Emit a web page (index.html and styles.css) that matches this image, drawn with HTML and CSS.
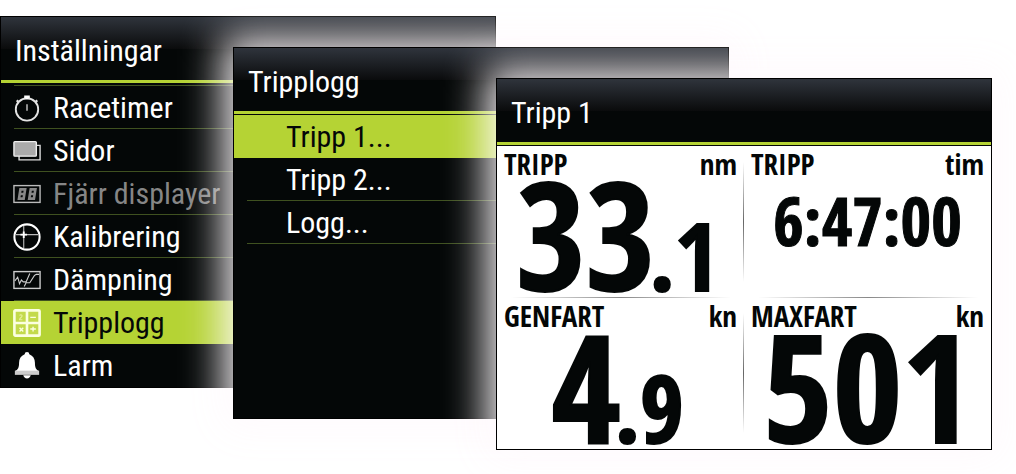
FILE: index.html
```html
<!DOCTYPE html>
<html lang="sv">

<head>
    <meta charset="UTF-8">
    <meta name="viewport" content="width=device-width, initial-scale=1.0">
    <title>Tripplogg</title>
    <link rel="stylesheet" href="styles.css">
</head>

<body>
    <main class="screens">
        <section class="panel settings">
            <h2 class="title">Inställningar</h2>
            <ul class="menu">
                <li>
                    <button type="button">
                        <svg class="icon" viewBox="0 0 30 30" fill="none" stroke="#e4e4e4">
                            <circle cx="15" cy="16.500" r="12" stroke-width="2" />
                            <path d="M15 11v7" stroke="#999" stroke-width="2" />
                            <path d="M12 3h6M15 2.500v3" stroke="#fff" stroke-width="3" />
                            <path d="M5.500 6.500l-1.500 2M24.500 6.500l1.500 2" stroke-width="2" />
                        </svg>
                        Racetimer
                    </button>
                </li>
                <li>
                    <button type="button">
                        <svg class="icon" viewBox="0 0 30 30" fill="none" stroke="#ddd">
                            <path d="M6.500 20v4.500h22.500V9H25" stroke-width="1.500" />
                            <rect x="1" y="5" width="24" height="15.500" rx="1" fill="#aaa" stroke="#eee" stroke-width="1.500" />
                        </svg>
                        Sidor
                    </button>
                </li>
                <li>
                    <button type="button" disabled>
                        <svg class="icon" viewBox="0 0 30 30" fill="none" stroke="#bbb">
                            <rect x="1" y="6" width="28" height="18" stroke-width="1.500" />
                            <path d="M8 10h5l-.8 5H7.200zM7.200 15h5l-.8 5h-5zM19 10h5l-.8 5h-5zM18.200 15h5l-.8 5h-5z" stroke="#888" stroke-width="2.800" />
                        </svg>
                        Fjärr displayer
                    </button>
                </li>
                <li>
                    <button type="button">
                        <svg class="icon" viewBox="0 0 30 30" fill="none" stroke="#fff">
                            <circle cx="15" cy="15" r="13.500" stroke-width="2.200" />
                            <path d="M3 12.500h24M11.500 3v24" stroke="#bbb" stroke-width="1.200" />
                            <path d="M8 12.500h7M11.500 9v7" stroke-width="2" />
                        </svg>
                        Kalibrering
                    </button>
                </li>
                <li>
                    <button type="button">
                        <svg class="icon" viewBox="0 0 30 30" fill="none" stroke="#ccc">
                            <rect x="1" y="6" width="28" height="18" stroke-width="1.500" />
                            <path d="M2 16l3-4 2 7 2-4 2 2h3l4-9M12 22l2-4h4l5-8 2-1h3" stroke-width="1.200" />
                        </svg>
                        Dämpning
                    </button>
                </li>
                <li>
                    <button type="button" class="selected">
                        <svg class="icon" viewBox="0 0 30 30" fill="none" stroke="#fbffe0">
                            <rect x="1.500" y="1.500" width="27" height="27" rx="1" fill="#c3da4c" stroke-width="2.800" />
                            <path d="M15 2v26M2 15h26" stroke-width="2.800" />
                            <path d="M18.500 9h6M7 20l4 4M11 20l-4 4M18.500 21.500h6M21.500 19v5" stroke-width="1.500" />
                            <path d="M7 7c1-1.500 3.500-.5 2.500 1s-2.500 2-2.500 3.500h3" stroke="#e4f09a" stroke-width="1.200" />
                        </svg>
                        Tripplogg
                    </button>
                </li>
                <li>
                    <button type="button">
                        <svg class="icon" viewBox="0 0 30 30">
                            <path d="M12.500 2.500a2.500 2.500 0 0 1 5 0c4 1.500 6 5 6 9 0 5 1 7.500 4.500 9H2c3.500-1.500 4.500-4 4.500-9 0-4 2-7.500 6-9z" fill="#fff" />
                            <path d="M2 20h26v4.500H2z" fill="#ccc" />
                            <path d="M11 25h8c-.5 2-2 3.500-4 3.500s-3.500-1.500-4-3.500z" fill="#fff" />
                        </svg>
                        Larm
                    </button>
                </li>
            </ul>
        </section>

        <section class="panel triplog">
            <h2 class="title">Tripplogg</h2>
            <ul class="menu indented">
                <li><button type="button" class="selected">Tripp 1...</button></li>
                <li><button type="button">Tripp 2...</button></li>
                <li><button type="button">Logg...</button></li>
            </ul>
        </section>

        <section class="panel trip">
            <h2 class="title">Tripp 1</h2>
            <div class="gauges">
                <div class="gauge">
                    <div class="caption"><span>TRIPP</span><span>nm</span></div>
                    <div class="value">33<small>.1</small></div>
                </div>
                <div class="gauge">
                    <div class="caption"><span>TRIPP</span><span>tim</span></div>
                    <div class="value time">6:47:00</div>
                </div>
                <div class="gauge">
                    <div class="caption"><span>GENFART</span><span>kn</span></div>
                    <div class="value">4<small>.9</small></div>
                </div>
                <div class="gauge">
                    <div class="caption"><span>MAXFART</span><span>kn</span></div>
                    <div class="value">501</div>
                </div>
            </div>
        </section>
    </main>
</body>

</html>
```
FILE: styles.css
```css
* {
    box-sizing: border-box;
}

body {
    margin: 0;
    background-color: #fff;
    font-family: "Roboto Condensed", Roboto, "Open Sans", sans-serif;
}

/* Each panel covers part of the one before it */
.screens {
    display: grid;
    grid-template-columns: 233fr 263fr 233fr 263fr;
    grid-template-rows: 31px 31px auto 31px 31px;
    padding: 16px 24px 24px 0;
}

.panel {
    display: flex;
    flex-direction: column;
    min-width: 0;
    border: 1px solid #000;
    background-color: #040707;
    color: #fff;
}

.settings {
    grid-area: 1 / 1 / 4 / 3;
}

.triplog {
    grid-area: 2 / 2 / 5 / 4;
    box-shadow: 0 0 38px 10px rgba(255, 250, 253, 0.95);
}

.trip {
    grid-area: 3 / 3 / 6 / 5;
    box-shadow: 0 0 38px 10px rgba(255, 250, 253, 0.95);
}

.title {
    margin: 0;
    padding: 12px 14px 8px;
    border-bottom: 3px solid #b5d334;
    background: linear-gradient(#2f343c, #0a0b0c 32px, #040707 32px);
    font-size: 30px;
    font-weight: normal;
    line-height: 43px;
}

.menu {
    margin: 0;
    padding: 1px 0;
    list-style: none;
}

.settings .menu {
    padding: 3px 0 0;
    background: linear-gradient(#3f5120, #3f5120) 13px 2px / 100% 1px no-repeat;
}

.menu button {
    display: flex;
    align-items: center;
    gap: 12px;
    width: 100%;
    height: 43px;
    padding: 0 12px;
    border: none;
    background: linear-gradient(#3f5120, #3f5120) 13px 100% / 100% 1px no-repeat;
    color: #fff;
    font-family: inherit;
    font-size: 30px;
    text-align: left;
    cursor: pointer;
}

.menu button:disabled {
    color: #868686;
    cursor: default;
}

.menu .selected {
    background: #b5d334;
    color: #040707;
}

.settings li:last-child button {
    background: none;
}

.indented button {
    padding-left: 52px;
}

.icon {
    flex: none;
    width: 28px;
    height: 28px;
}

.gauges {
    display: grid;
    flex: 1;
    grid-template-columns: 1fr 1fr;
    grid-template-rows: 1fr 1fr;
    margin-top: 1px;
    background-color: #fff;
    color: #040707;
    font-family: "Open Sans Condensed", "Open Sans", sans-serif;
    font-weight: bold;
}

.gauge {
    padding: 0 7px;
    background: linear-gradient(90deg, #fff, #888, #fff) 50% 100% / 220px 1px no-repeat;
}

.gauge:nth-child(odd) {
    background:
        linear-gradient(90deg, #fff, #888, #fff) 50% 100% / 220px 1px no-repeat,
        linear-gradient(#fff, #666, #fff) 100% 50% / 1px 120px no-repeat;
}

.gauge:nth-child(n + 3) {
    background-size: 0 0, 1px 120px;
}

.caption {
    display: flex;
    justify-content: space-between;
    font-size: 29px;
    line-height: 36px;
}

.value {
    font-size: 150px;
    line-height: 103px;
    text-align: center;
    white-space: nowrap;
    -webkit-text-stroke: 2px #040707;
}

.value small {
    margin: 0 6px 0 -6px;
    font-size: 94px;
    line-height: 1px;
}

.time {
    font-size: 66px;
    line-height: 76px;
    -webkit-text-stroke-width: 1px;
}
```
